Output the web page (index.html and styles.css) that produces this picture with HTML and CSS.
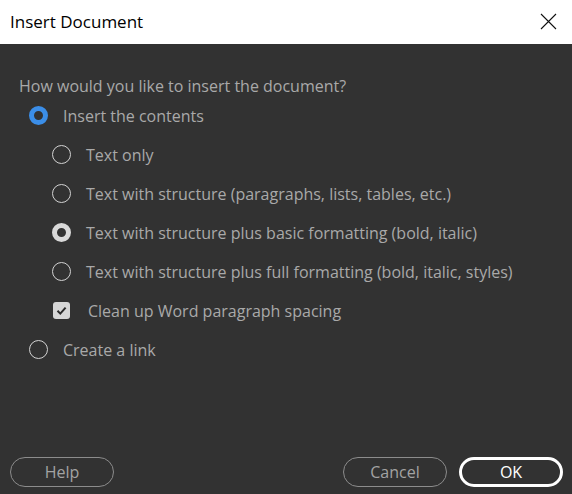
FILE: index.html
```html
<!DOCTYPE html>
<html lang="en">
<head>
    <meta charset="UTF-8">
    <meta name="viewport" content="width=device-width, initial-scale=1.0">
    <title>Insert Document</title>
    <link rel="stylesheet" href="styles.css">
</head>
<body>
    <div class="dialog">
        <div class="titlebar">
            <span class="title">Insert Document</span>
            <span class="close">
                <svg width="17" height="17" viewBox="0 0 17 17">
                    <path d="M1 1 L16 16 M16 1 L1 16" stroke="#111" stroke-width="1.1" fill="none"/>
                </svg>
            </span>
        </div>

        <div class="content">
            <div class="question">How would you like to insert the document?</div>

            <div class="option">
                <span class="radio radio-active"></span>
                <span class="label">Insert the contents</span>
            </div>
            <div class="option sub">
                <span class="radio"></span>
                <span class="label">Text only</span>
            </div>
            <div class="option sub">
                <span class="radio"></span>
                <span class="label">Text with structure (paragraphs, lists, tables, etc.)</span>
            </div>
            <div class="option sub">
                <span class="radio radio-checked"></span>
                <span class="label">Text with structure plus basic formatting (bold, italic)</span>
            </div>
            <div class="option sub">
                <span class="radio"></span>
                <span class="label">Text with structure plus full formatting (bold, italic, styles)</span>
            </div>
            <div class="option sub check-row">
                <span class="checkbox">
                    <svg width="17" height="17" viewBox="0 0 17 17">
                        <path d="M4.5 8.8 L7.3 11.6 L12.6 5.6" stroke="#2a2a2a" stroke-width="2" fill="none"/>
                    </svg>
                </span>
                <span class="label">Clean up Word paragraph spacing</span>
            </div>
            <div class="option">
                <span class="radio"></span>
                <span class="label">Create a link</span>
            </div>
        </div>

        <div class="footer">
            <button class="btn">Help</button>
            <div class="footer-right">
                <button class="btn">Cancel</button>
                <button class="btn btn-primary">OK</button>
            </div>
        </div>
    </div>
</body>
</html>
```

FILE: styles.css
```css
* {
    box-sizing: border-box;
    font-family: 'Open Sans', 'Liberation Sans', Arial, sans-serif;
}

body {
    margin: 0;
    padding: 0;
    background: #323232;
}

.dialog {
    width: 572px;
    height: 494px;
    display: flex;
    flex-direction: column;
    background: #323232;
}

.titlebar {
    height: 44px;
    background: #ffffff;
    display: flex;
    align-items: center;
    justify-content: space-between;
    padding: 0 15px 1px 10px;
}

.title {
    font-size: 17px;
    color: #000;
}

.close {
    display: flex;
}

.content {
    flex: 1;
    padding: 32px 0 0 19px;
    color: #a9a9a9;
    font-size: 16px;
}

.question {
    height: 20px;
    line-height: 20px;
}

.option {
    height: 39px;
    display: flex;
    align-items: center;
    padding-left: 10px;
}

.option.sub {
    padding-left: 33px;
}

.radio {
    width: 19px;
    height: 19px;
    border-radius: 50%;
    border: 1.5px solid #d2d2d2;
    flex-shrink: 0;
    margin-right: 15px;
}

.radio-active {
    border: 5px solid #3b8ee8;
}

.radio-checked {
    border: 5px solid #d9d9d9;
}

.checkbox {
    width: 17px;
    height: 17px;
    border-radius: 3px;
    background: #d6d6d6;
    display: flex;
    flex-shrink: 0;
    margin-left: 1px;
    margin-right: 18px;
}

.footer {
    display: flex;
    justify-content: space-between;
    align-items: center;
    padding: 0 9px 7px 10px;
}

.footer-right {
    display: flex;
    gap: 12px;
}

.btn {
    width: 104px;
    height: 30px;
    border-radius: 15px;
    border: 1px solid #8c8c8c;
    background: transparent;
    color: #a3a3a3;
    font-size: 16px;
    padding: 0;
}

.btn-primary {
    border: 3px solid #ffffff;
    color: #ffffff;
}
```
